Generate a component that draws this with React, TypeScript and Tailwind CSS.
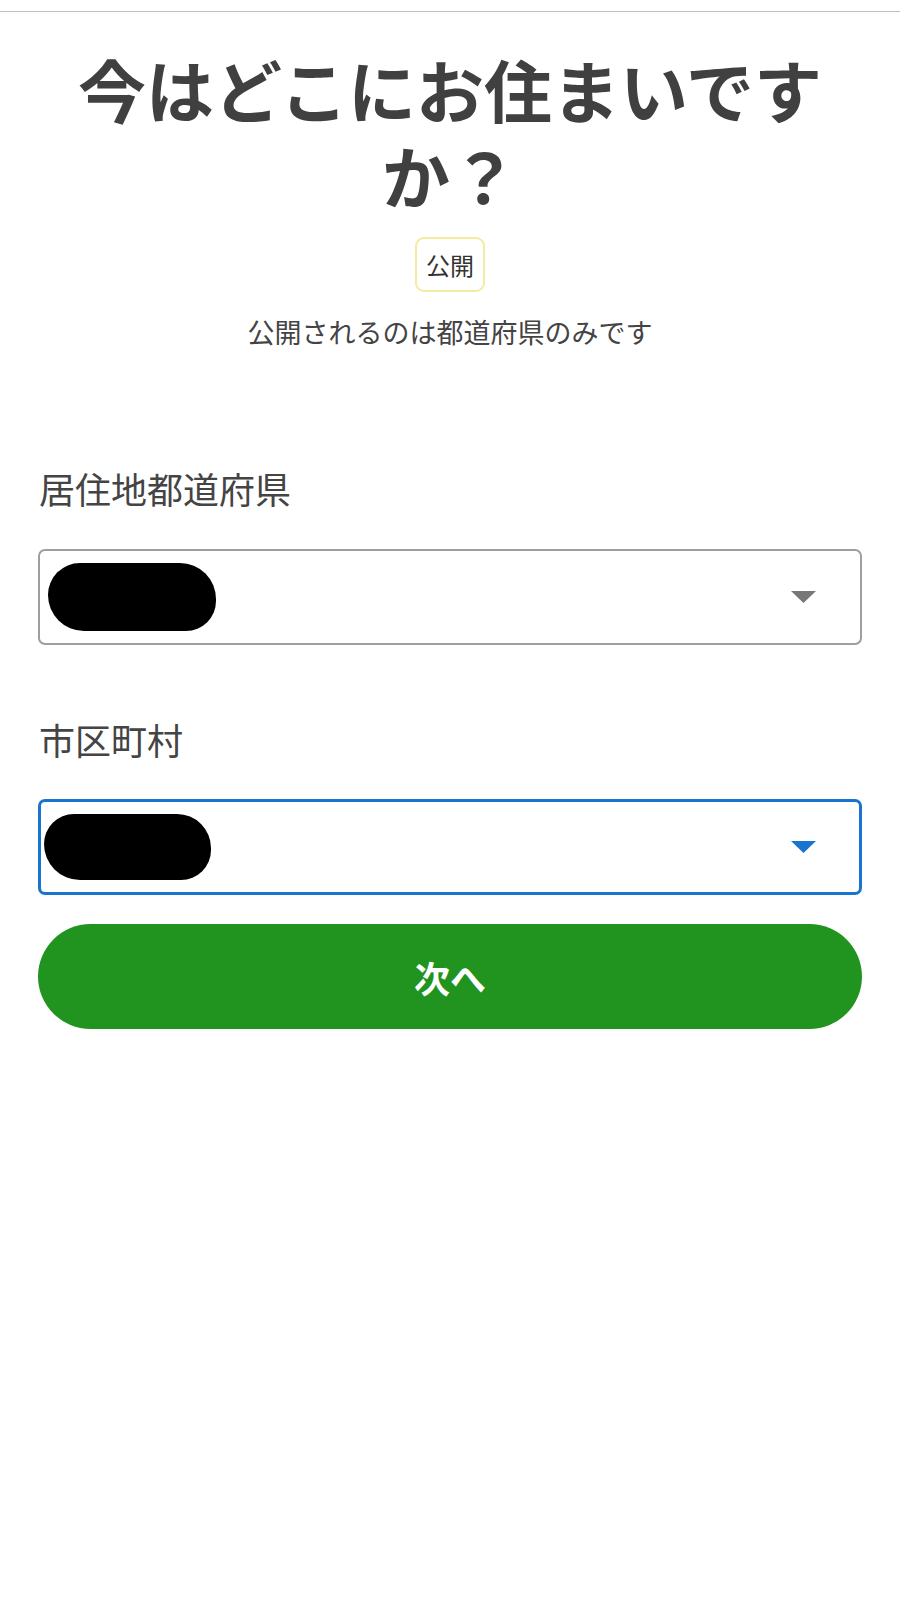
import React from "react";

const font = { fontFamily: '"Noto Sans CJK JP", "Noto Sans", sans-serif' };

function Blob({ className }: { className: string }) {
  return <div className={"bg-black " + className} />;
}

function Select({ active }: { active?: boolean }) {
  return (
    <div
      className={
        "flex items-center justify-between bg-white rounded-[7px] h-[96px] " +
        (active ? "border-[3px] border-[#1a73cf] pl-[3px] pr-[43px]" : "border-2 border-[#9e9e9e] pl-[8px] pr-[44px]")
      }
    >
      <Blob className={active ? "w-[167px] h-[66px] rounded-[30px_34px_30px_36px]" : "w-[168px] h-[68px] rounded-[32px_36px_30px_36px]"} />
      <svg width="25" height="12" viewBox="0 0 25 12">
        <polygon points="0,0 25,0 12.5,12" fill={active ? "#1a73cf" : "#777777"} />
      </svg>
    </div>
  );
}

export default function App() {
  return (
    <div className="w-[900px] min-h-[1600px] bg-white text-[#444444]" style={font}>
      <div className="h-[11px]" />
      <div className="h-px bg-[#bdbdbd]" />
      <div className="px-[60px] mt-[34px]">
        <h1 className="text-center font-bold text-[68px] leading-[86px] text-[#404040]">
          今はどこにお住まいですか？
        </h1>
      </div>
      <div className="flex justify-center mt-[19px]">
        <div className="border-2 border-[#f5eba0] rounded-[9px] px-[9px] h-[55px] flex items-center text-[24px] text-[#333333]">
          公開
        </div>
      </div>
      <p className="text-center text-[27px] leading-[38px] mt-[21px] text-[#444444]">
        公開されるのは都道府県のみです
      </p>
      <div className="px-[38px]">
        <div className="mt-[112px] text-[36px] leading-[50px] pl-px">居住地都道府県</div>
        <div className="mt-[36px]">
          <Select />
        </div>
        <div className="mt-[69px] text-[36px] leading-[50px] pl-px">市区町村</div>
        <div className="mt-[35px]">
          <Select active />
        </div>
        <button className="mt-[29px] w-full h-[105px] rounded-full bg-[#21931f] text-white font-bold text-[36px] flex items-center justify-center">
          次へ
        </button>
      </div>
    </div>
  );
}
